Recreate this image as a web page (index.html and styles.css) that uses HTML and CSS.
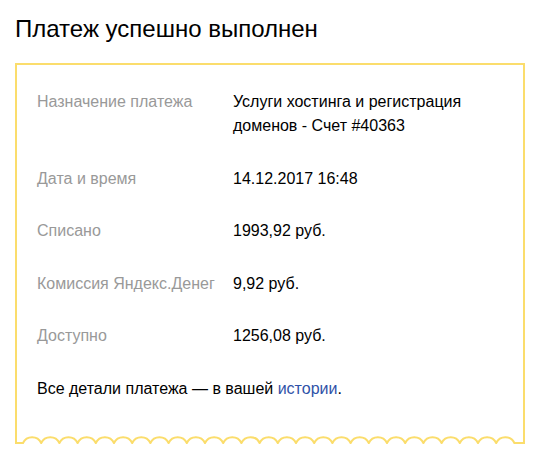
FILE: index.html
```html
<!DOCTYPE html>
<html lang="ru">
<head>
    <meta charset="UTF-8">
    <meta name="viewport" content="width=device-width, initial-scale=1.0">
    <title>Платеж успешно выполнен</title>
    <link rel="stylesheet" href="styles.css">
</head>
<body>
    <h1 class="page-title">Платеж успешно выполнен</h1>

    <div class="receipt">
        <div class="receipt-body">
            <dl class="details">
                <dt>Назначение платежа</dt>
                <dd>Услуги хостинга и регистрация доменов - Счет #40363</dd>

                <dt>Дата и время</dt>
                <dd>14.12.2017 16:48</dd>

                <dt>Списано</dt>
                <dd>1993,92 руб.</dd>

                <dt>Комиссия Яндекс.Денег</dt>
                <dd>9,92 руб.</dd>

                <dt>Доступно</dt>
                <dd>1256,08 руб.</dd>
            </dl>
            <p class="note">Все детали платежа — в вашей <a href="#">истории</a>.</p>
        </div>
        <!-- torn paper edge -->
        <svg class="receipt-edge" viewBox="0 0 506 10" width="506" height="10">
            <path d="M0,9 H6
                a10,10 0 0 1 18.2,0 a10,10 0 0 1 18.2,0 a10,10 0 0 1 18.2,0
                a10,10 0 0 1 18.2,0 a10,10 0 0 1 18.2,0 a10,10 0 0 1 18.2,0
                a10,10 0 0 1 18.2,0 a10,10 0 0 1 18.2,0 a10,10 0 0 1 18.2,0
                a10,10 0 0 1 18.2,0 a10,10 0 0 1 18.2,0 a10,10 0 0 1 18.2,0
                a10,10 0 0 1 18.2,0 a10,10 0 0 1 18.2,0 a10,10 0 0 1 18.2,0
                a10,10 0 0 1 18.2,0 a10,10 0 0 1 18.2,0 a10,10 0 0 1 18.2,0
                a10,10 0 0 1 18.2,0 a10,10 0 0 1 18.2,0 a10,10 0 0 1 18.2,0
                a10,10 0 0 1 18.2,0 a10,10 0 0 1 18.2,0 a10,10 0 0 1 18.2,0
                a10,10 0 0 1 18.2,0 a10,10 0 0 1 18.2,0 a10,10 0 0 1 18.2,0
                H506" />
        </svg>
    </div>
</body>
</html>
```

FILE: styles.css
```css
body {
    margin: 0;
    background: #fff;
    font-family: 'Liberation Sans', Arial, sans-serif;
    color: #000;
}
.page-title {
    margin: 15px 15px 20px;
    font-size: 24px;
    font-weight: 400;
    line-height: 28px;
}
.receipt {
    width: 506px;
    margin-left: 15px;
    border: 2px solid #fbdd6c;
    border-bottom: none;
}
.receipt-body {
    padding: 25px 20px 33px;
    font-size: 16px;
    line-height: 24px;
}
.details {
    display: grid;
    grid-template-columns: 196px 1fr;
    row-gap: 28.5px;
    margin: 0;
}
.details dt {
    color: #999;
}
.details dd {
    margin: 0;
    padding-right: 10px;
}
.note {
    margin: 28.5px 0 0;
}
.note a {
    color: #2f52a8;
    text-decoration: none;
}
.receipt-edge {
    display: block;
}
.receipt-edge path {
    fill: none;
    stroke: #fbdd6c;
    stroke-width: 2;
}
```
